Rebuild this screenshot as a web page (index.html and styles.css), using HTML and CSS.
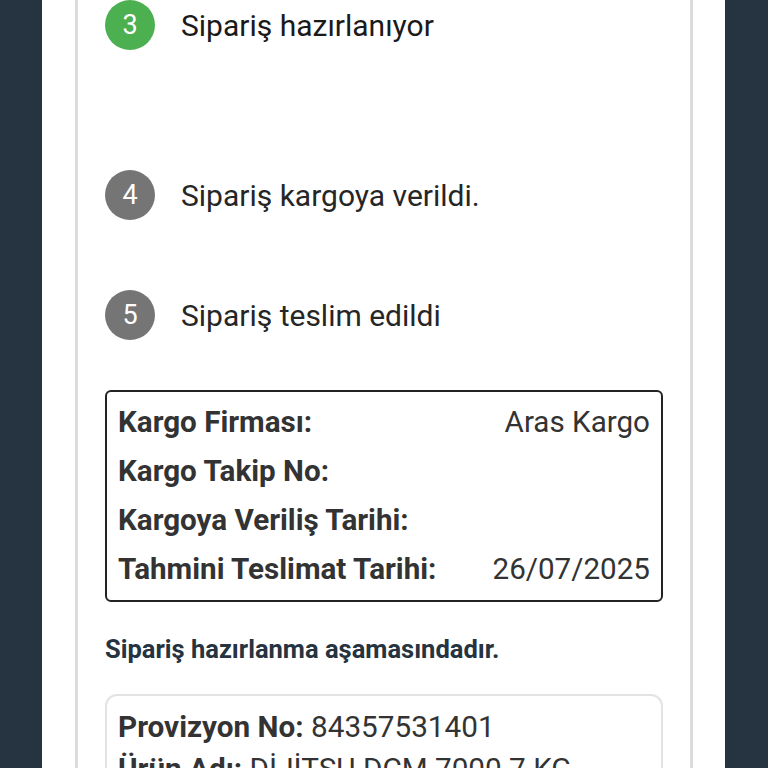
FILE: index.html
```html
<!DOCTYPE html>
<html lang="tr">
<head>
<meta charset="utf-8">
<link rel="stylesheet" href="styles.css">
</head>
<body>
<div class="page">
  <div class="card">
    <div class="step step-active">
      <span class="dot dot-green">3</span>
      <span class="step-label">Sipariş hazırlanıyor</span>
    </div>
    <div class="step">
      <span class="dot">4</span>
      <span class="step-label">Sipariş kargoya verildi.</span>
    </div>
    <div class="step step-last">
      <span class="dot">5</span>
      <span class="step-label">Sipariş teslim edildi</span>
    </div>
    <div class="info">
      <div class="info-row"><span class="info-key">Kargo Firması:</span><span class="info-val">Aras Kargo</span></div>
      <div class="info-row"><span class="info-key">Kargo Takip No:</span><span class="info-val"></span></div>
      <div class="info-row"><span class="info-key">Kargoya Veriliş Tarihi:</span><span class="info-val"></span></div>
      <div class="info-row"><span class="info-key">Tahmini Teslimat Tarihi:</span><span class="info-val">26/07/2025</span></div>
    </div>
    <p class="status">Sipariş hazırlanma aşamasındadır.</p>
    <div class="product">
      <div class="prod-line"><b>Provizyon No:</b> 84357531401</div>
      <div class="prod-line"><b>Ürün Adı:</b> DİJİTSU DCM 7000 7 KG</div>
    </div>
  </div>
</div>
</body>
</html>
```
FILE: styles.css
```css
html, body {
  margin: 0;
  padding: 0;
  height: 768px;
  overflow: hidden;
  background: #263340;
  font-family: Roboto, "Liberation Sans", sans-serif;
}
.page {
  margin-left: 42px;
  width: 683px;
  height: 768px;
  background: #ffffff;
  overflow: hidden;
}
.card {
  margin-left: 33px;
  width: 618px;
  height: 768px;
  border-left: 3px solid #dcdcdc;
  border-right: 3px solid #dcdcdc;
  padding: 0 27px;
  box-sizing: border-box;
}
.step {
  display: flex;
  align-items: center;
  gap: 26px;
  height: 50px;
  margin-bottom: 70px;
}
.step-active {
  margin-bottom: 120px;
}
.step-last {
  margin-bottom: 0;
}
.dot {
  flex: none;
  width: 50px;
  height: 50px;
  border-radius: 50%;
  background: #757575;
  color: #ffffff;
  font-size: 27px;
  display: flex;
  align-items: center;
  justify-content: center;
}
.dot-green {
  background: #4caf50;
}
.step-label {
  font-size: 30px;
  color: #262626;
}
.step-active .step-label {
  color: #1a1a1a;
}
.info {
  margin-top: 50px;
  border: 2px solid #222222;
  border-radius: 6px;
  padding: 6px 11px;
}
.info-row {
  display: flex;
  justify-content: space-between;
  height: 49px;
  line-height: 49px;
  font-size: 29.6px;
  color: #333333;
}
.info-key {
  font-weight: 700;
}
.status {
  margin: 32px 0 0;
  font-size: 25.5px;
  font-weight: 700;
  color: #263340;
  line-height: 30px;
}
.product {
  margin-top: 30px;
  border: 2px solid #e3e3e3;
  border-radius: 12px;
  padding: 10px 11px;
}
.prod-line {
  font-size: 29.7px;
  line-height: 42px;
  color: #333333;
}
.prod-line b {
  font-weight: 700;
}
```
